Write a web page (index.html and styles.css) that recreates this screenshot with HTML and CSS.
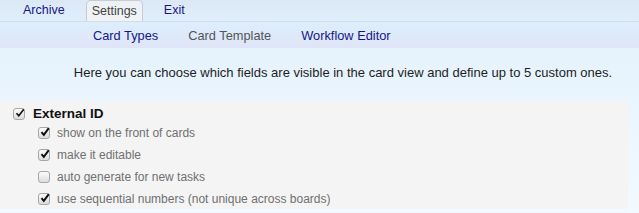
FILE: index.html
```html
<!DOCTYPE html>
<html>
<head>
<meta charset="utf-8">
<link rel="stylesheet" href="styles.css">
</head>
<body>
<div class="topbar">
  <nav class="tabs">
    <a class="tab">Archive</a>
    <a class="tab active">Settings</a>
    <a class="tab">Exit</a>
  </nav>
</div>
<div class="subnav">
  <a class="sublink">Card Types</a>
  <a class="sublink current">Card Template</a>
  <a class="sublink">Workflow Editor</a>
</div>
<main class="content">
  <p class="intro">Here you can choose which fields are visible in the card view and define up to 5 custom ones.</p>
  <section class="panel">
    <div class="field-head">
      <span class="cb checked"><svg viewBox="0 0 12 12"><path d="M2.5 6.2 L4.8 8.8 L9.8 2.2" fill="none" stroke="#111" stroke-width="1.6"/></svg></span>
      <span class="field-name">External ID</span>
    </div>
    <ul class="options">
      <li class="opt"><span class="cb checked"><svg viewBox="0 0 12 12"><path d="M2.5 6.2 L4.8 8.8 L9.8 2.2" fill="none" stroke="#111" stroke-width="2"/></svg></span>show on the front of cards</li>
      <li class="opt"><span class="cb checked"><svg viewBox="0 0 12 12"><path d="M2.5 6.2 L4.8 8.8 L9.8 2.2" fill="none" stroke="#111" stroke-width="2"/></svg></span>make it editable</li>
      <li class="opt"><span class="cb"></span>auto generate for new tasks</li>
      <li class="opt"><span class="cb checked"><svg viewBox="0 0 12 12"><path d="M2.5 6.2 L4.8 8.8 L9.8 2.2" fill="none" stroke="#111" stroke-width="2"/></svg></span>use sequential numbers (not unique across boards)</li>
    </ul>
  </section>
</main>
</body>
</html>
```
FILE: styles.css
```css
html, body {
  margin: 0;
  padding: 0;
}
body {
  font-family: "Liberation Sans", Arial, sans-serif;
  background: linear-gradient(#e2f0fc 0px, #e6f3fd 60px, #eef7fe 140px, #f2f9ff 213px);
  height: 213px;
  overflow: hidden;
}
.topbar {
  background: linear-gradient(#dce8f5, #e0eefb);
  border-bottom: 1px solid #d3dde9;
  box-sizing: border-box;
  height: 22px;
}
.tabs {
  display: flex;
  align-items: flex-end;
  height: 21px;
  padding-left: 10px;
}
.tab {
  font-size: 12.5px;
  color: #16168a;
  padding: 0 13px 4px;
  line-height: 14px;
}
.tab.active {
  color: #444;
  background: linear-gradient(#eef2f6, #f1f3f5);
  border: 1px solid #c8ccd2;
  border-bottom: none;
  border-radius: 5px 5px 0 0;
  padding: 3px 5px 3px;
  margin: 0 8px;
}
.subnav {
  height: 26px;
  display: flex;
  align-items: center;
  padding-left: 93px;
  gap: 30px;
  background: linear-gradient(#ddeefc, #dfe5f6);
}
.sublink {
  font-size: 12.8px;
  color: #16168a;
}
.sublink.current {
  color: #555;
}
.intro {
  margin: 0;
  padding: 17px 0 0 47px;
  height: 36px;
  text-align: center;
  font-size: 13px;
  color: #1e1e1e;
  line-height: 15px;
}
.panel {
  background: #f4f4f4;
  width: 628px;
  height: 108px;
  box-sizing: border-box;
  padding-top: 5px;
}
.field-head {
  display: flex;
  align-items: center;
  padding-left: 13px;
  height: 15px;
}
.field-name {
  font-weight: bold;
  font-size: 13.5px;
  color: #111;
  margin-left: 8px;
}
.cb {
  width: 12px;
  height: 12px;
  border: 1px solid #a7a7a7;
  border-radius: 3px;
  background: linear-gradient(#fcfcfc, #dcdcdc);
  box-sizing: border-box;
  position: relative;
  flex: none;
}
.cb svg {
  position: absolute;
  left: 0;
  top: -2px;
  width: 12px;
  height: 12px;
}
.options {
  list-style: none;
  margin: 1px 0 0 0;
  padding: 0 0 0 38px;
}
.opt {
  display: flex;
  align-items: center;
  height: 22px;
  font-size: 12px;
  color: #707070;
}
.opt .cb {
  margin-right: 7px;
}
```
